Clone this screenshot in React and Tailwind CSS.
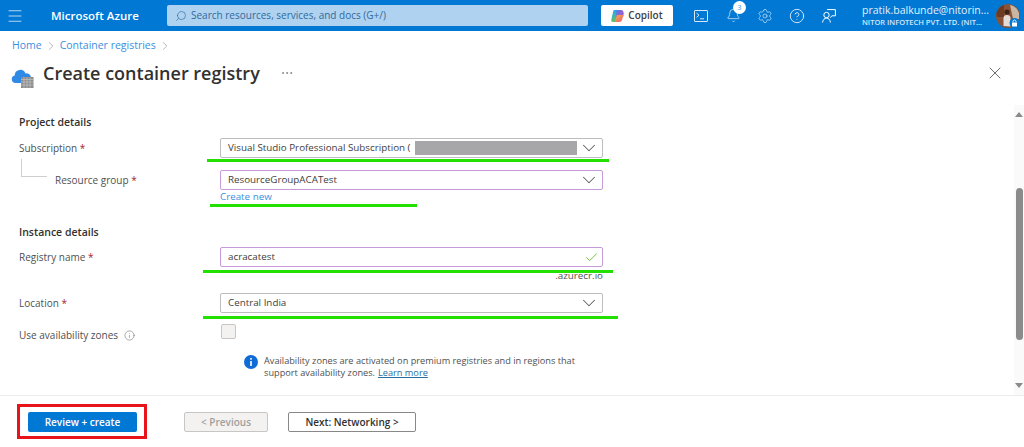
import React from 'react';
import { ChevronDown, Check, X, Menu, Search, Bell, Settings, CircleHelp, Info, ChevronRight, Ellipsis } from 'lucide-react';

const font = { fontFamily: '"Open Sans", "Noto Sans", sans-serif' };

const TerminalIcon = () => (
  <svg width="14" height="12" viewBox="0 0 14 12" fill="none" stroke="#d5e8f8" strokeWidth="1">
    <rect x="0.500" y="0.500" width="13" height="11" rx="0.500" />
    <path d="M2.500 3l2.500 2.200L2.500 7.400M6 8.800h4" />
  </svg>
);

const FeedbackIcon = () => (
  <svg width="14" height="14" viewBox="0 0 14 14" fill="none" stroke="#ffffff" strokeWidth="1">
    <circle cx="4.500" cy="6" r="2.700" />
    <path d="M0.600 13.500c.3-2.800 1.800-4.400 3.900-4.400s3.600 1.600 3.900 4.400" />
    <path d="M5 .6h8.400v6.200H10L8.200 8.600" />
  </svg>
);

const CopilotLogo = () => (
  <svg width="13" height="12" viewBox="0 0 13 12">
    <defs>
      <linearGradient id="cpa" x1="0" y1="0" x2="0" y2="1">
        <stop offset="0" stopColor="#2aa5e6" />
        <stop offset="1" stopColor="#5cc46a" />
      </linearGradient>
      <linearGradient id="cpb" x1="0" y1="0" x2="1" y2="1">
        <stop offset="0" stopColor="#4f7be8" />
        <stop offset="1" stopColor="#d04fc4" />
      </linearGradient>
      <linearGradient id="cpc" x1="0" y1="0" x2="1" y2="1">
        <stop offset="0" stopColor="#f0b23c" />
        <stop offset="1" stopColor="#ee5a7c" />
      </linearGradient>
    </defs>
    <path d="M3.500 0H8L5.500 8.500 4.500 12H2C.6 12 0 11 .3 9.700L2 2C2.200.8 2.700 0 3.500 0z" fill="url(#cpa)" />
    <path d="M5.500 0H10c1.600 0 2.600 1.100 2.800 3.500L12 7H7L5 9z" fill="url(#cpb)" />
    <path d="M6 5h6.500L11 10c-.4 1.300-1.300 2-2.600 2H3.500z" fill="url(#cpc)" />
  </svg>
);

const CloudIcon = () => (
  <svg width="24" height="24" viewBox="0 0 24 24">
    <path d="M4.500 18a3.800 3.800 0 0 1-.8-7.500A5.600 5.600 0 0 1 14.500 8.400a4.400 4.400 0 0 1 3.700 7.800L16 18z" fill="#2f8ae6" />
    <rect x="10" y="12" width="12.500" height="11" fill="#8c8c8c" />
    <path d="M10 14.500h12.500M10 17h12.500M10 20h12.500M13 12v11M16 12v11M19 12v11" stroke="#c4c4c4" strokeWidth="0.700" />
  </svg>
);

const Avatar = () => (
  <svg width="24" height="24" viewBox="0 0 24 24" className="shrink-0">
    <circle cx="12" cy="12" r="12" fill="#8a5236" />
    <path d="M14 1a12 12 0 0 1 9 8v6h-6z" fill="#c9b6a3" />
    <path d="M0.500 9A12 12 0 0 1 8 1v12H1z" fill="#6d3a22" />
    <circle cx="11" cy="8" r="2.600" fill="#3a2418" />
    <path d="M7.500 22V14c0-2 1.500-3 3.500-3s3.500 1 3.500 3v8.500z" fill="#e4dcd8" />
    <circle cx="18.500" cy="19" r="5" fill="#0078d4" />
    <rect x="16" y="18.500" width="5" height="4" rx="0.500" fill="#fff" />
    <path d="M17 18.500v-1a1.500 1.500 0 0 1 3 0v1" fill="none" stroke="#fff" strokeWidth="0.900" />
  </svg>
);

const Chevron = () => <ChevronDown size={22} strokeWidth={1.100} className="text-[#605e5c] shrink-0" />;

const Req = () => <span className="text-[#a4262c]"> *</span>;

const Heading = ({ className = '', children }) => (
  <div className={`h-4 flex items-center pl-[19px] text-[10.500px] font-semibold text-[#323130] ${className}`}>{children}</div>
);

const Row = ({ label, className = '', indent, children }) => (
  <div className={`flex items-center h-5 pl-[19px] ${className}`}>
    <div className={`w-[201px] shrink-0 text-[10px] text-[#505050] ${indent ? 'pl-[36px]' : ''}`}>{label}</div>
    {children}
  </div>
);

const Field = ({ purple, children }) => (
  <div className={`w-[383px] h-5 flex items-center justify-between pl-[7px] pr-[2px] rounded-[2px] border text-[9.800px] text-[#404040] ${purple ? 'border-[#c79ad9]' : 'border-[#bdbdbd]'}`}>
    {children}
  </div>
);

export default function App() {
  return (
    <div className="relative w-[1024px] h-[447px] overflow-hidden bg-white flex flex-col" style={font}>
      <header className="h-[31px] shrink-0 bg-[#0078d4] flex items-center text-white">
        <Menu size={18} strokeWidth={1.100} className="ml-[6px] text-[#dcecf9]" />
        <span className="ml-[27px] w-[116px] text-[11.500px] font-semibold">Microsoft Azure</span>
        <div className="w-[421px] h-[21px] bg-[#afd2f0] rounded-[2px] flex items-center pl-[8px] text-[#2f6a9c] text-[10px]">
          <Search size={12} strokeWidth={1.300} className="-scale-x-100" />
          <span className="ml-[4px]">Search resources, services, and docs (G+/)</span>
        </div>
        <div className="ml-[13px] w-[72px] h-[21px] bg-white rounded-[2px] flex items-center justify-center gap-[4px] text-[#404040] text-[10px] font-semibold">
          <CopilotLogo />
          Copilot
        </div>
        <div className="ml-[12px] flex items-center">
          <div className="w-8 flex justify-center"><TerminalIcon /></div>
          <div className="w-8 flex justify-center relative">
            <Bell size={15} strokeWidth={1.100} className="text-[#e3f0fb]" />
            <span className="absolute -top-[7px] left-[16px] w-[13px] h-[13px] rounded-full bg-white text-[#3d97dc] text-[7.500px] flex items-center justify-center">3</span>
          </div>
          <div className="w-8 flex justify-center"><Settings size={16} strokeWidth={1} className="text-[#dcecf9]" /></div>
          <div className="w-8 flex justify-center"><CircleHelp size={16} strokeWidth={1.200} /></div>
          <div className="w-8 flex justify-center"><FeedbackIcon /></div>
        </div>
        <div className="ml-[17px] w-[131px] text-left leading-none whitespace-nowrap">
          <div className="text-[10.500px] text-[#e3f0fb]">pratik.balkunde@nitorin...</div>
          <div className="text-[7.500px] font-semibold mt-[3px] text-[#d6e8f8]">NITOR INFOTECH PVT. LTD. (NIT...</div>
        </div>
        <div className="ml-[3px]"><Avatar /></div>
      </header>

      <nav className="h-[28px] shrink-0 flex items-center pt-[2px] pl-[12px] text-[10.500px] text-[#3b8fdf]">
        <span>Home</span>
        <ChevronRight size={14} strokeWidth={1} className="mx-[2px] text-[#8a8886]" />
        <span>Container registries</span>
        <ChevronRight size={14} strokeWidth={1} className="ml-[2px] text-[#8a8886]" />
      </nav>

      <div className="h-[28px] shrink-0 flex items-center pl-[11px] pr-[19px]">
        <div className="w-[32px] pt-[7px]"><CloudIcon /></div>
        <h1 className="text-[18px] font-semibold text-[#323130] whitespace-nowrap">Create container registry</h1>
        <Ellipsis size={14} strokeWidth={1} className="ml-[20px] text-[#605e5c]" />
        <X size={20} strokeWidth={1.100} className="ml-auto text-[#605e5c]" />
      </div>

      <div className="h-[18px] shrink-0" />

      <main className="h-[290px] shrink-0 flex">
        <div className="flex-1 pt-[10px]">
          <Heading>Project details</Heading>
          <Row label={<>Subscription<Req /></>} className="mt-[7px]">
            <Field>
              <div className="flex items-center whitespace-nowrap">
                <span>Visual Studio Professional Subscription (</span>
                <span className="w-[162px] h-[14px] bg-[#a7a7a9] ml-[4px]" />
              </div>
              <Chevron />
            </Field>
          </Row>
          <div className="relative mt-[12px]">
            <div className="absolute left-[21px] -top-[11px] w-[26px] h-[18px] border-l border-b border-[#cfcfcf]" />
            <Row label={<>Resource group<Req /></>} indent>
              <Field purple>
                <span>ResourceGroupACATest</span>
                <Chevron />
              </Field>
            </Row>
          </div>
          <div className="pl-[220px] h-[14px] flex items-center text-[9.800px] text-[#3b8fdf]">Create new</div>
          <Heading className="mt-[21px]">Instance details</Heading>
          <Row label={<>Registry name<Req /></>} className="mt-[6px]">
            <Field purple>
              <span>acracatest</span>
              <Check size={15} strokeWidth={1.500} className="text-[#6fbf3a] mr-[1px]" />
            </Field>
          </Row>
          <div className="h-[26px] w-[603px] flex items-start justify-end pt-[2px] text-[9.800px] leading-[14px] text-[#505050]">.azurecr.io</div>
          <Row label={<>Location<Req /></>}>
            <Field>
              <span>Central India</span>
              <Chevron />
            </Field>
          </Row>
          <div className="flex items-start h-4 mt-[11px] pl-[19px]">
            <div className="w-[202px] shrink-0 flex items-center pt-[3px] text-[10px] leading-4 text-[#505050]">
              Use availability zones
              <Info size={11} strokeWidth={1.100} className="ml-[6px] text-[#605e5c]" />
            </div>
            <div className="w-[15px] h-[15px] rounded-[2px] border border-[#c8c6c4] bg-[#f3f2f1]" />
          </div>
          <div className="flex mt-[15px] pl-[244px]">
            <svg width="14" height="14" viewBox="0 0 14 14" className="shrink-0">
              <circle cx="7" cy="7" r="7" fill="#0f6cd6" />
              <rect x="6.200" y="6" width="1.600" height="5" fill="#fff" />
              <rect x="6.200" y="3" width="1.600" height="1.700" fill="#fff" />
            </svg>
            <div className="ml-[6px] text-[9.200px] leading-[12px] text-[#505050] whitespace-nowrap">
              <div>Availability zones are activated on premium registries and in regions that</div>
              <div className="flex gap-[3px]">
                <span>support availability zones.</span>
                <span className="text-[#2b6f9e] underline">Learn more</span>
              </div>
            </div>
          </div>
        </div>
        <div className="w-[10px] shrink-0 bg-[#fafafa] flex flex-col items-center justify-between py-[7px]">
          <div className="w-0 h-0 border-x-[4px] border-x-transparent border-b-[5px] border-b-[#8a8a8a]" />
          <div className="w-[7px] h-[152px] mt-[68px] mb-[41px] rounded-[4px] bg-[#8b8b8b]" />
          <div className="w-0 h-0 border-x-[4px] border-x-transparent border-t-[5px] border-t-[#8a8a8a]" />
        </div>
      </main>

      <footer className="h-[52px] shrink-0 border-t border-[#ececec] flex items-start pt-[16px] pl-[28px] text-[10px] font-semibold">
        <button className="w-[109px] h-5 rounded-[2px] bg-[#0078d4] text-white">Review + create</button>
        <button className="ml-[47px] w-[84px] h-5 rounded-[2px] bg-[#f3f2f1] border border-[#c8c6c4] text-[#a19f9d]">&lt; Previous</button>
        <button className="ml-[20px] w-[128px] h-5 rounded-[2px] bg-white border border-[#8a8886] text-[#323130]">Next: Networking &gt;</button>
      </footer>

      {/* annotations drawn on top of the screenshot */}
      <div className="absolute left-[207px] top-[159px] w-[402px] h-[3px] bg-[#22e000]" />
      <div className="absolute left-[210px] top-[204px] w-[207px] h-[3px] bg-[#22e000]" />
      <div className="absolute left-[203px] top-[270px] w-[410px] h-[3px] bg-[#22e000]" />
      <div className="absolute left-[203px] top-[316px] w-[415px] h-[3px] bg-[#22e000]" />
      <div className="absolute left-[17px] top-[404px] w-[130px] h-[35px] border-[3px] border-[#e8141c]" />
    </div>
  );
}
